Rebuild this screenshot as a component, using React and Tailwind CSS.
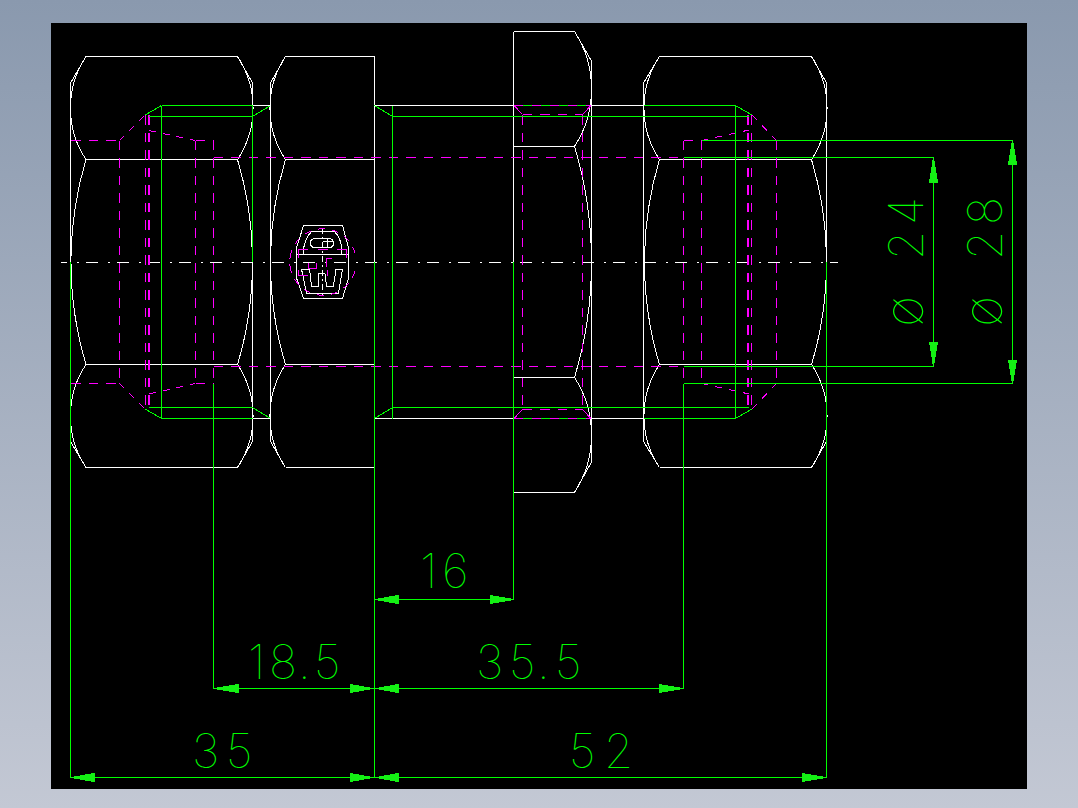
const G = "#00ff00";

function left(xc, xo) {
  return `M${xc} 56.5 L${xo} 83 M${xc} 467.5 L${xo} 441.5 M${xc} 56.5 A93 93 0 0 0 ${xc} 159.5 A357 357 0 0 0 ${xc} 364.5 A93 93 0 0 0 ${xc} 467.5`;
}
function right(xc, xo) {
  return `M${xc} 56.5 L${xo} 83 M${xc} 467.5 L${xo} 441.5 M${xc} 56.5 A93 93 0 0 1 ${xc} 159.5 A357 357 0 0 1 ${xc} 364.5 A93 93 0 0 1 ${xc} 467.5`;
}

const whitePath = [
  // left nut
  "M86 56.5H237.5 M86 467.5H237.5 M86 159.5H237.5 M86 364.5H237.5",
  "M70.5 83V262 M252.5 83V106 M252.5 262V441.5",
  left(86, 70.5),
  right(237.5, 252.5),
  "M252.5 105.5H270.5 M252.5 418.5H270.5",
  // second nut
  "M285.5 56.5H374.5V262 M285.5 467.5H374.5 M285.5 159.5H374.5 M285.5 364.5H374.5",
  "M270.5 83V441.5",
  left(285.5, 270.5),
  // body
  "M374.5 105.5H514 M591.5 105.5H643.5 M374.5 418.5H514 M591.5 418.5H643.5",
  // hex
  "M513.5 31.5H574.5L591.5 61V462L574.5 492.5H513.5 M513.5 31.5V262",
  "M513.5 146.5H574.5 M513.5 377.5H574.5",
  "M574.5 31.5A105.7 105.7 0 0 1 574.5 146.5A401 401 0 0 1 574.5 377.5A105.7 105.7 0 0 1 574.5 492.5",
  // right nut
  "M659.5 56.5H811.5 M659.5 467.5H811.5 M659.5 159.5H811.5 M659.5 364.5H811.5",
  "M643.5 83V441.5 M826.5 83V262",
  left(659.5, 643.5),
  right(811.5, 826.5),
  // symbol
  "M303.5 225.5H342.5L348.5 248V278L342.5 298.5H303.5L296.5 278V248Z",
  "M303.5 254.5H341.5Q343 240 334 231H312Q303 240 303.5 254.5Z",
  "M315 238.5H329Q333.5 238.5 333.5 243Q333.5 247.5 329 247.5H315Q310.5 247.5 310.5 243Q310.5 238.5 315 238.5Z",
  "M322.5 241H333 M327.5 238V247",
  "M301.5 269L306.5 293H338.5L342.5 269H336L333.5 286H326.5L325 273.5H318.5V286H311.5L309.5 269Z",
  "M296.5 254.5H303 M341.5 254.5H348",
].join(" ");

const magentaDash = [
  // left nut
  "M71 140.5H119.5 M71 383.5H119.5 M195.5 140.5H213.5 M195.5 383.5H213.5",
  "M119.5 140.5V383.5 M195.5 140.5V383.5 M213.5 140.5V383.5 M145.5 115V409",
  "M213.5 157.5H683.5 M213.5 366.5H683.5",
  // hex
  "M522.5 114.5H582.5 M522.5 409.5H582.5 M522.5 115V409 M582.5 115V409",
  // right nut
  "M683.5 140.5V383.5 M701.5 140.5V383.5 M776.5 140.5V383.5 M751.5 115V409 M683.5 140.5H701.5 M683.5 383.5H701.5",
].join(" ");

const magentaThin = [
  "M119.5 140.5L145 115 M119.5 383.5L145 409",
  "M149 130.5L195.5 140.5 M149 394L195.5 383.5",
  "M776.5 140.5L752 115 M776.5 383.5L752 409",
  "M701.5 140.5L749 130 M701.5 383.5L749 394",
  "M291 271A33 33 0 0 1 355 253 M355 271A33 33 0 0 1 291 253",
].join(" ");

const magentaSolid = [
  "M514 105.5L522.5 114.5 M591 105.5L582.5 114.5 M514 418.5L522.5 409.5 M591 418.5L582.5 409.5",
  "M298.5 258V249.5H308 M317.5 249.5H327.5 M336.5 249.5H346V258 M331.5 258.5H326.5V267",
  "M298.5 270V275.5H308 M308.5 263V268.5H316.5V263 M327.5 270V276",
].join(" ");

const greenPath = [
  "M161.5 105.5H252.5 M149 116.5H252.5 M161.5 418.5H252.5 M149 407.5H252.5 M161.5 105.5V418.5",
  "M145 115L161.5 105.5 M145 409L161.5 418.5 M252.5 116.5L270.5 105.5 M252.5 407.5L270.5 418.5 M252.5 106V262",
  "M374.5 105.5L392.5 116.5 M374.5 418.5L392.5 407.5 M392.5 105.5V418.5",
  "M392.5 116.5H749 M392.5 407.5H749",
  "M514 105.5H591 M514 418.5H591",
  "M643.5 105.5H735.5 M643.5 418.5H735.5 M735.5 105.5V418.5 M735.5 105.5L752 115 M735.5 418.5L752 409",
  "M683.5 157.5H933.5 M683.5 366.5H933.5 M701.5 140.5H1012.5 M683.5 383.5H1012.5",
  "M933.5 157.5V366.5 M1012.5 140.5V383.5",
  "M70.5 262V777.5 M374.5 262V777.5 M826.5 262V777.5 M513.5 262V599.5 M213.5 383.5V688.5 M683.5 383.5V688.5",
  "M374.5 599.5H513.5 M213.5 688.5H683.5 M70.5 777.5H826.5",
].join(" ");

const arrows = [
  "933.5,157.5 929.5,182 937.5,182", "933.5,366.5 929.5,342 937.5,342",
  "1012.5,140.5 1008.5,164 1016.5,164", "1012.5,383.5 1008.5,360 1016.5,360",
  "375,599.5 398,595.5 398,603.5", "513.5,599.5 490,595.5 490,603.5",
  "214,688.5 238,684.5 238,692.5", "373,688.5 350,684.5 350,692.5",
  "376,688.5 398,684.5 398,692.5", "683,688.5 659,684.5 659,692.5",
  "71,777.5 94,773.5 94,781.5", "373,777.5 350,773.5 350,781.5",
  "376,777.5 398,773.5 398,781.5", "826,777.5 802,773.5 802,781.5",
];

const labels = [
  { t: "16", x: "420 442", y: 588 },
  { t: "18.5", x: "248 269 298 314", y: 679 },
  { t: "35.5", x: "476 509 537 555", y: 679 },
  { t: "35", x: "192 226", y: 768 },
  { t: "52", x: "569 604", y: 768 },
];

export default function App() {
  return (
    <div className="w-full h-[808px] bg-gradient-to-b from-[#8a99ae] to-[#c3c8d4] pt-[23px] pl-[51px] overflow-hidden">
      <div className="w-[976px] h-[766px] bg-black">
        <svg viewBox="51 23 976 766" width="976" height="766" className="block" shapeRendering="crispEdges" fill="none">
          <path d={whitePath} stroke="#ffffff" />
          <path d="M61 262.5H838" stroke="#ffffff" strokeDasharray="12 10 2 7" strokeDashoffset="6.3" />
          <path d="M322.5 228V297" stroke="#ffffff" strokeDasharray="6 3 2 3" />
          <path d={magentaDash} stroke="#ff00ff" strokeDasharray="9.5 8" />
          <path d="M149 115V409 M748 115V409" stroke="#ff00ff" strokeWidth="2" strokeDasharray="9.5 8" />
          <path d={magentaThin} stroke="#ff00ff" strokeDasharray="7 7" />
          <path d={magentaSolid} stroke="#ff00ff" />
          <path d={greenPath} stroke={G} />
          <path d="M514 105.5H591 M514 418.5H591" stroke="#ff00ff" strokeDasharray="9 9" />
          {arrows.map((p) => (
            <polygon key={p} points={p} fill="#14f014" stroke="#14f014" />
          ))}
          <g className="[font-family:Inter,sans-serif] font-thin text-[47px]" fill={G}>
            {labels.map((l) => (
              <text key={l.t + l.x} x={l.x} y={l.y}>{l.t}</text>
            ))}
            <text transform="translate(923 325) rotate(-90)" x="-2" y="0" className="text-[54px]">ø</text>
            <text transform="translate(923 325) rotate(-90)" x="65 100" y="0">24</text>
            <text transform="translate(1002 325) rotate(-90)" x="-2" y="0" className="text-[54px]">ø</text>
            <text transform="translate(1002 325) rotate(-90)" x="65 100" y="0">28</text>
          </g>
        </svg>
      </div>
    </div>
  );
}
